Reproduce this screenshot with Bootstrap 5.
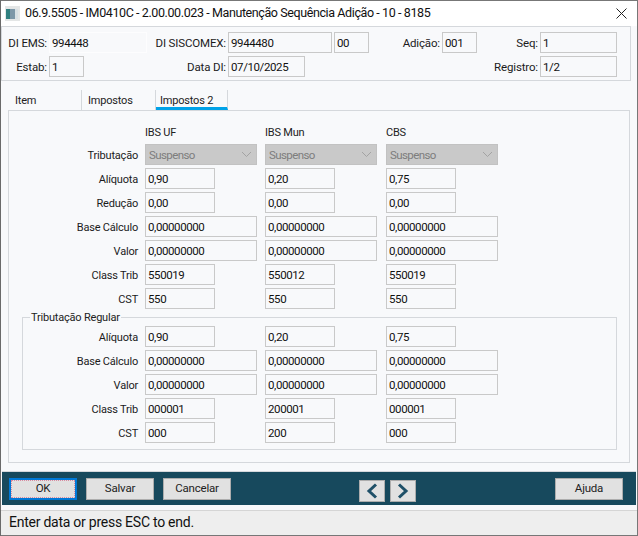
<!DOCTYPE html>
<html lang="pt">
<head>
<meta charset="utf-8">
<title>IM0410C</title>
<link href="https://cdn.jsdelivr.net/npm/bootstrap@5.3.0/dist/css/bootstrap.min.css" rel="stylesheet">
<style>
html,body{margin:0;background:#6a6a6a;overflow:hidden}
body{font-family:Roboto,"Liberation Sans",sans-serif;font-size:11px;letter-spacing:-.2px;color:#1b1b1b;line-height:16px}
.win{width:637px;height:536px;margin-left:1px;background:#f8f9fb;border-right:1px solid #777;border-bottom:1px solid #777;border-top:1px solid #777}
.titlebar{height:25px;background:#fff;padding-left:4px;padding-right:10px;font-size:12.5px;letter-spacing:-.4px;padding-bottom:1px}
.titlebar .ttl{margin-left:5px;color:#111}
.toppanel{display:grid;grid-template-columns:45px 98px 77px 104px 35px 69px 35px 59px 77px;column-gap:2px;row-gap:3px;grid-auto-rows:21px;width:630px;height:55px;padding:5px 0 0 0;border:1px solid #d5d8dc}
.lb{text-align:right;align-self:center;padding-top:3px}
.toppanel .lb{font-size:11.5px;letter-spacing:-.15px;padding-top:1px}
.fld{height:21px;border:1px solid #c9c9c9;padding:0 2px;line-height:20px;color:#111;font-size:11.5px;letter-spacing:-.4px;background:#f8f9fb;white-space:nowrap;overflow:hidden}
.fld-soft{border-color:#fdfdfe}
.w35{width:35px}.w77{width:77px}
.c3{grid-column:3}.c8{grid-column:8}.c4s{grid-column:4 / span 2}
.tabsrow{height:29px;padding:9px 0 0 7px}
.tabitem{height:20px;width:74px;padding-left:7px;border-right:1px solid #d5d8dc;line-height:21px;color:#222}
.tabitem.tw2{width:74px;padding-left:6px}
.tabitem.tw3{width:72px;padding-left:4px;border-bottom:3px solid #00a2e8}
.tabbody{width:622px;height:353px;margin-left:7px;border:1px solid #d5d8dc;padding-top:14px}
.fgrid{display:grid;grid-template-columns:136px 120px 121px 112px;row-gap:3px;grid-auto-rows:21px}
.fgrid .hd{height:16px;align-self:start;color:#222}
.fgrid.tb{grid-template-rows:16px}
.fgrid .lb{padding-right:7px}
.in-s{width:70px}.in-l{width:112px}
.sel{width:112px;height:21px;background:#c9c9c9;border:1px solid #c2c2c2;color:#7d7d7d;padding-left:3px;line-height:20px;font-size:11.5px;letter-spacing:-.6px}
.gbox{margin:0 12px 0 13px;padding:0 0 6px;border:1px solid #d5d8dc;width:595px;min-width:0}
.gbox legend{float:none;width:auto;font-size:11px;line-height:16px;margin:0 0 0 7px;padding:1px 1px 0;color:#222}
.gbox .fgrid{grid-template-columns:122px 120px 121px 112px}
.actionbar{width:634px;height:34px;margin:8px 0 0 1px;background:#17495d;padding-left:7px;border-top:1px solid #d5d8dc}
.wbtn{width:68px;height:22px;padding:0;border-radius:0;background:#e1e1e1;border:1px solid #adadad;color:#222;font-size:11.5px;letter-spacing:-.2px;line-height:19px}
.wbtn:hover{background:#e1e1e1}
.wbtn.ok{border:2px solid #0078d7;outline:1px dotted #d98aa0;outline-offset:-3px;line-height:17px}
.arr{width:26px;height:22px;padding:0;border-radius:0;background:#e1e1e1;border:1px solid #adadad;margin-top:4px}
.m1{margin-left:9px}.m2{margin-left:9px}.m3{margin-left:128px}.m4{margin-left:5px}.m5{margin-left:139px}
.statusbar{height:25px;margin-top:5px;background:#eee;border-top:1px solid #d5d5d5;padding-left:8px;font-size:14px;line-height:23px;color:#111;letter-spacing:-.25px}
</style>
</head>
<body>
<div class="win d-flex flex-column">
  <div class="titlebar d-flex align-items-center justify-content-between">
    <div class="d-flex align-items-center">
      <svg width="15" height="15" viewBox="0 0 15 15"><rect x="0" y="0" width="15" height="15" fill="#e4e6e6"/><rect x="1" y="3" width="4" height="10" fill="#2f7f7f"/><rect x="5" y="3" width="5" height="10" fill="#7d97a8"/><rect x="10" y="3" width="3" height="10" fill="#d8e0e4"/></svg>
      <span class="ttl">06.9.5505 - IM0410C - 2.00.00.023 - Manutenção Sequência Adição - 10 - 8185</span>
    </div>
    <svg width="11" height="11" viewBox="0 0 11 11"><path d="M.5.5l10 10M10.500.5l-10 10" stroke="#222" stroke-width="1" fill="none"/></svg>
  </div>

  <div class="toppanel">
    <div class="lb">DI EMS:</div><div class="fld fld-soft">994448</div>
    <div class="lb">DI SISCOMEX:</div><div class="fld">9944480</div><div class="fld">00</div>
    <div class="lb">Adição:</div><div class="fld">001</div>
    <div class="lb">Seq:</div><div class="fld">1</div>

    <div class="lb">Estab:</div><div class="fld w35">1</div>
    <div class="lb c3">Data DI:</div><div class="fld w77 c4s">07/10/2025</div>
    <div class="lb c8">Registro:</div><div class="fld">1/2</div>
  </div>

  <div class="tabsrow d-flex">
    <div class="tabitem">Item</div>
    <div class="tabitem tw2">Impostos</div>
    <div class="tabitem tw3">Impostos 2</div>
  </div>

  <div class="tabbody">
    <div class="fgrid tb">
      <div></div><div class="hd">IBS UF</div><div class="hd">IBS Mun</div><div class="hd">CBS</div>

      <div class="lb">Tributação</div>
      <div class="sel d-flex justify-content-between align-items-center">Suspenso<svg class="me-1" width="11" height="7" viewBox="0 0 11 7"><path d="M1 1l4.500 4.500L10 1" stroke="#a3a3a3" fill="none"/></svg></div>
      <div class="sel d-flex justify-content-between align-items-center">Suspenso<svg class="me-1" width="11" height="7" viewBox="0 0 11 7"><path d="M1 1l4.500 4.500L10 1" stroke="#a3a3a3" fill="none"/></svg></div>
      <div class="sel d-flex justify-content-between align-items-center">Suspenso<svg class="me-1" width="11" height="7" viewBox="0 0 11 7"><path d="M1 1l4.500 4.500L10 1" stroke="#a3a3a3" fill="none"/></svg></div>

      <div class="lb">Alíquota</div><div class="fld in-s">0,90</div><div class="fld in-s">0,20</div><div class="fld in-s">0,75</div>
      <div class="lb">Redução</div><div class="fld in-s">0,00</div><div class="fld in-s">0,00</div><div class="fld in-s">0,00</div>
      <div class="lb">Base Cálculo</div><div class="fld in-l">0,00000000</div><div class="fld in-l">0,00000000</div><div class="fld in-l">0,00000000</div>
      <div class="lb">Valor</div><div class="fld in-l">0,00000000</div><div class="fld in-l">0,00000000</div><div class="fld in-l">0,00000000</div>
      <div class="lb">Class Trib</div><div class="fld in-s">550019</div><div class="fld in-s">550012</div><div class="fld in-s">550019</div>
      <div class="lb">CST</div><div class="fld in-s">550</div><div class="fld in-s">550</div><div class="fld in-s">550</div>
    </div>

    <fieldset class="gbox">
      <legend>Tributação Regular</legend>
      <div class="fgrid">
        <div class="lb">Alíquota</div><div class="fld in-s">0,90</div><div class="fld in-s">0,20</div><div class="fld in-s">0,75</div>
        <div class="lb">Base Cálculo</div><div class="fld in-l">0,00000000</div><div class="fld in-l">0,00000000</div><div class="fld in-l">0,00000000</div>
        <div class="lb">Valor</div><div class="fld in-l">0,00000000</div><div class="fld in-l">0,00000000</div><div class="fld in-l">0,00000000</div>
        <div class="lb">Class Trib</div><div class="fld in-s">000001</div><div class="fld in-s">200001</div><div class="fld in-s">000001</div>
        <div class="lb">CST</div><div class="fld in-s">000</div><div class="fld in-s">200</div><div class="fld in-s">000</div>
      </div>
    </fieldset>
  </div>

  <div class="actionbar d-flex align-items-center">
    <button type="button" class="btn wbtn ok">OK</button>
    <button type="button" class="btn wbtn m1">Salvar</button>
    <button type="button" class="btn wbtn m2">Cancelar</button>
    <button type="button" class="btn arr m3 d-flex align-items-center justify-content-center" aria-label="Anterior"><svg width="12" height="16" viewBox="0 0 12 16"><path d="M10 1.500L3 8l7 6.500" stroke="#1f5068" stroke-width="3" fill="none"/></svg></button>
    <button type="button" class="btn arr m4 d-flex align-items-center justify-content-center" aria-label="Próximo"><svg width="12" height="16" viewBox="0 0 12 16"><path d="M2 1.500L9 8l-7 6.500" stroke="#1f5068" stroke-width="3" fill="none"/></svg></button>
    <button type="button" class="btn wbtn m5">Ajuda</button>
  </div>

  <div class="statusbar">Enter data or press ESC to end.</div>
</div>
</body>
</html>
